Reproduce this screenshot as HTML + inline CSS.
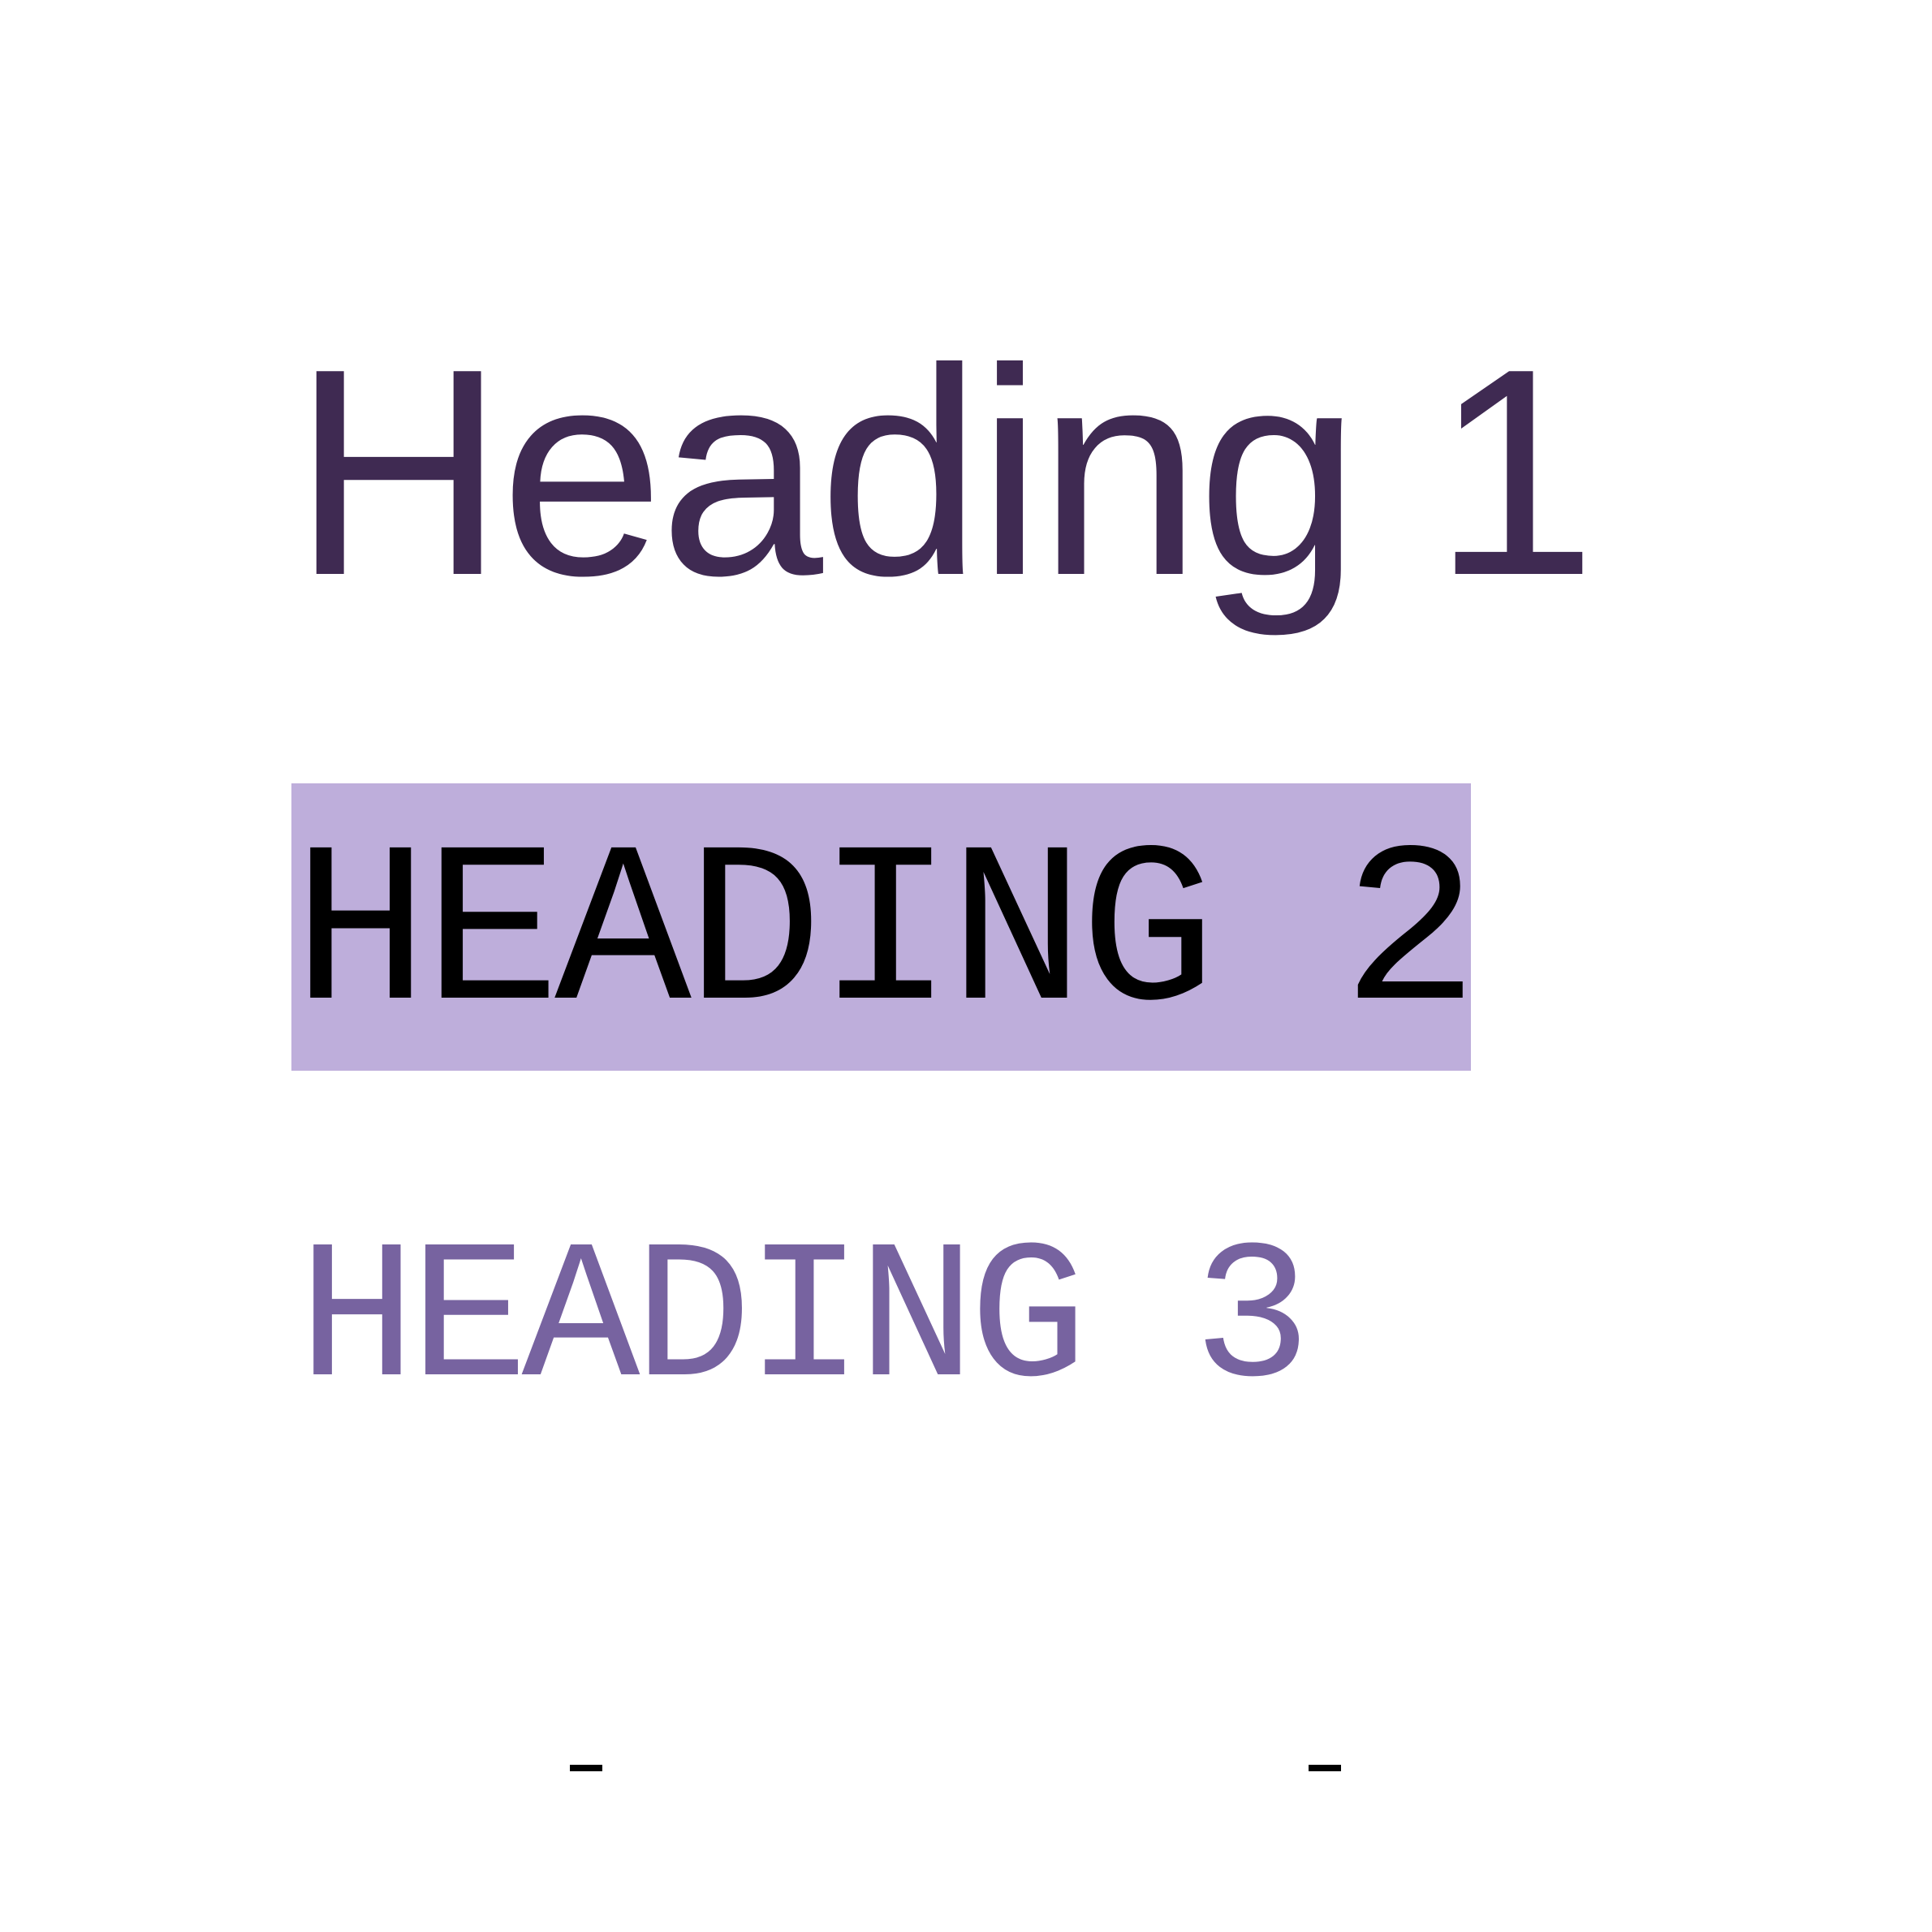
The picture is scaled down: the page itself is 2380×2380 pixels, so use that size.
<!DOCTYPE html>
<html><head><meta charset="utf-8"><style>
html,body{margin:0;padding:0;background:#fff;width:2380px;height:2380px;overflow:hidden;position:relative}
.t{position:absolute;white-space:nowrap;line-height:1}
#h1{left:360px;top:400px;font-family:"Liberation Sans",sans-serif;font-size:363px;color:#3f2a52;letter-spacing:-6px}
#box{position:absolute;left:359px;top:965px;width:1453px;height:354px;background:#beaedb}
#h2{left:360px;top:1015px;font-family:"Liberation Mono",monospace;font-size:281px;color:#000;letter-spacing:-7px}
#h3{left:367px;top:1507px;font-family:"Liberation Mono",monospace;font-size:243px;color:#7763a0;letter-spacing:-8px}
.d{position:absolute;top:2174px;width:40px;height:8px;background:#000}
</style></head><body>
<div class="t" id="h1">Heading 1</div>
<div id="box"></div>
<div class="t" id="h2">HEADING 2</div>
<div class="t" id="h3">HEADING 3</div>
<div class="d" style="left:702px"></div>
<div class="d" style="left:1612px"></div>
</body></html>
